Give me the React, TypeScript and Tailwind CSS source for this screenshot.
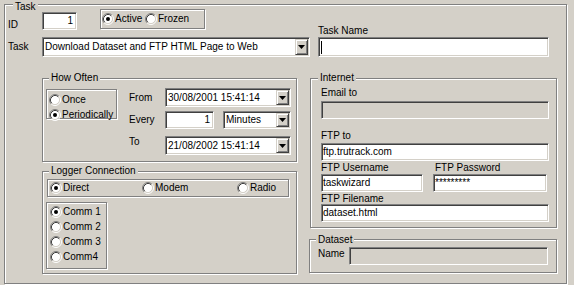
const etched = 'border border-[#808080] shadow-[inset_1px_1px_0_#fff,1px_1px_0_#fff]';
const sunken =
  'border border-t-[#808080] border-l-[#808080] border-r-white border-b-white shadow-[inset_1px_1px_0_#404040,inset_-1px_-1px_0_#d4d0c8]';
const raised =
  'border border-t-[#d4d0c8] border-l-[#d4d0c8] border-r-[#404040] border-b-[#404040] shadow-[inset_1px_1px_0_#fff,inset_-1px_-1px_0_#808080]';

function Radio({ checked }: { checked?: boolean }) {
  return (
    <svg width="12" height="12" viewBox="0 0 12 12" className="shrink-0">
      <circle cx="6" cy="6" r="4.5" fill="#fff" />
      <path d="M2.11 9.89A5.5 5.5 0 0 1 9.89 2.11" fill="none" stroke="#808080" />
      <path d="M9.89 2.11A5.5 5.5 0 0 1 2.11 9.89" fill="none" stroke="#fff" />
      <path d="M2.82 9.18A4.5 4.5 0 0 1 9.18 2.82" fill="none" stroke="#404040" />
      <path d="M9.18 2.82A4.5 4.5 0 0 1 2.82 9.18" fill="none" stroke="#d4d0c8" />
      {checked && <circle cx="6" cy="6" r="2" fill="#000" />}
    </svg>
  );
}

function RadioItem({ label, checked, className = '' }: { label: string; checked?: boolean; className?: string }) {
  return (
    <div className={`flex items-center gap-[1px] whitespace-nowrap ${className}`}>
      <Radio checked={checked} />
      <span>{label}</span>
    </div>
  );
}

function Group({
  label,
  labelPos,
  className = '',
  children,
}: {
  label: string;
  labelPos: string;
  className?: string;
  children?: React.ReactNode;
}) {
  return (
    <div className={`relative ${etched} ${className}`}>
      <span className={`absolute px-[2px] bg-[#d4d0c8] whitespace-nowrap ${labelPos}`}>{label}</span>
      {children}
    </div>
  );
}

function Edit({ value, disabled, className = '' }: { value?: string; disabled?: boolean; className?: string }) {
  return (
    <div
      className={`flex items-center pl-[1px] whitespace-nowrap overflow-hidden ${sunken} ${
        disabled ? 'bg-[#d4d0c8]' : 'bg-white'
      } ${className}`}
    >
      {value}
    </div>
  );
}

function Combo({ value, className = '' }: { value: string; className?: string }) {
  return (
    <div className={`flex p-px bg-white ${sunken} ${className}`}>
      <span className="flex-1 flex items-center pl-[1px] whitespace-nowrap overflow-hidden">{value}</span>
      <div className={`w-[13px] flex items-center justify-center bg-[#d4d0c8] ${raised}`}>
        <svg width="7" height="4" viewBox="0 0 7 4">
          <path d="M0 0h7L3.5 4z" fill="#000" />
        </svg>
      </div>
    </div>
  );
}

export default function App() {
  return (
    <div className="w-[574px] h-[285px] overflow-hidden bg-[#d4d0c8] pl-[4px] pt-[4px] text-[10px] leading-[12px] text-black font-['Liberation_Sans',Arial,sans-serif]">
      <Group label="Task" labelPos="left-[8px] -top-[4px]" className="w-[563px] h-[280px]">
        <div className="flex items-end">
          <div className="w-[313px] pl-[3px] flex flex-col">
            <div className="mt-[4px] h-[21px] flex items-start">
              <span className="w-[34px] mt-[10px]">ID</span>
              <Edit value="1" className="mt-[3px] w-[35px] h-[18px] justify-end pr-[3px]" />
              <div className={`ml-[23px] w-[105px] h-[20px] flex items-center ${etched}`}>
                <RadioItem label="Active" checked className="ml-[1px] w-[43px]" />
                <RadioItem label="Frozen" />
              </div>
            </div>
            <div className="mt-[7px] flex items-start">
              <span className="w-[34px] mt-[4px]">Task</span>
              <Combo value="Download Dataset and FTP HTML Page to Web" className="w-[268px] h-[20px]" />
            </div>
          </div>
          <div className="flex flex-col">
            <span>Task Name</span>
            <div className={`w-[231px] h-[20px] flex items-center pl-[2px] bg-white ${sunken}`}>
              <div className="w-px h-[13px] bg-black" />
            </div>
          </div>
        </div>

        <div className="mt-[21px] flex items-start">
          <div className="ml-[37px] w-[255px] flex flex-col">
            <Group label="How Often" labelPos="left-[6px] -top-[7px]" className="h-[84px] flex items-start">
              <div className={`ml-[3px] mt-[10px] w-[71px] h-[30px] flex flex-col ${etched}`}>
                <RadioItem label="Once" className="ml-[2px] mt-[4px]" />
                <RadioItem label="Periodically" checked className="ml-[2px] mt-[3px]" />
              </div>
              <div className="ml-[12px] mt-[9px] flex flex-col">
                <div className="flex items-center">
                  <span className="w-[36px]">From</span>
                  <Combo value="30/08/2001 15:41:14" className="w-[126px] h-[19px]" />
                </div>
                <div className="mt-[4px] flex items-center">
                  <span className="w-[36px]">Every</span>
                  <Edit value="1" className="w-[49px] h-[18px] justify-end pr-[3px]" />
                  <Combo value="Minutes" className="ml-[9px] w-[68px] h-[18px]" />
                </div>
                <div className="mt-[7px] flex items-start">
                  <span className="w-[36px]">To</span>
                  <Combo value="21/08/2002 15:41:14" className="w-[126px] h-[19px]" />
                </div>
              </div>
            </Group>

            <Group label="Logger Connection" labelPos="left-[6px] -top-[7px]" className="mt-[9px] h-[103px]">
              <div className={`ml-[4px] mt-[7px] w-[242px] h-[18px] flex items-center ${etched}`}>
                <RadioItem label="Direct" checked className="ml-[2px] w-[92px]" />
                <RadioItem label="Modem" className="w-[95px]" />
                <RadioItem label="Radio" />
              </div>
              <div className={`ml-[3px] mt-[5px] w-[61px] h-[67px] flex flex-col gap-[3px] pt-[3px] pl-[3px] ${etched}`}>
                <RadioItem label="Comm 1" checked />
                <RadioItem label="Comm 2" />
                <RadioItem label="Comm 3" />
                <RadioItem label="Comm4" />
              </div>
            </Group>
          </div>

          <div className="ml-[13px] flex flex-col">
            <Group label="Internet" labelPos="left-[7px] -top-[7px]" className="w-[247px] h-[150px] flex flex-col pl-[10px]">
              <span className="mt-[8px]">Email to</span>
              <Edit disabled className="mt-[2px] w-[228px] h-[18px]" />
              <span className="mt-[11px]">FTP to</span>
              <Edit value="ftp.trutrack.com" className="mt-[1px] w-[228px] h-[18px]" />
              <div className="mt-[1px] flex">
                <span className="w-[114px]">FTP Username</span>
                <span>FTP Password</span>
              </div>
              <div className="flex">
                <Edit value="taskwizard" className="w-[102px] h-[18px]" />
                <Edit value="*********" className="ml-[10px] w-[114px] h-[18px]" />
              </div>
              <span className="mt-[1px]">FTP Filename</span>
              <Edit value="dataset.html" className="-mt-[1px] w-[228px] h-[18px]" />
            </Group>

            <Group label="Dataset" labelPos="left-[6px] -top-[6px]" className="mt-[11px] -ml-[1px] w-[248px] h-[34px] flex items-start">
              <span className="ml-[8px] mt-[8px] w-[31px]">Name</span>
              <Edit disabled className="mt-[7px] w-[199px] h-[18px]" />
            </Group>
          </div>
        </div>
      </Group>
    </div>
  );
}
